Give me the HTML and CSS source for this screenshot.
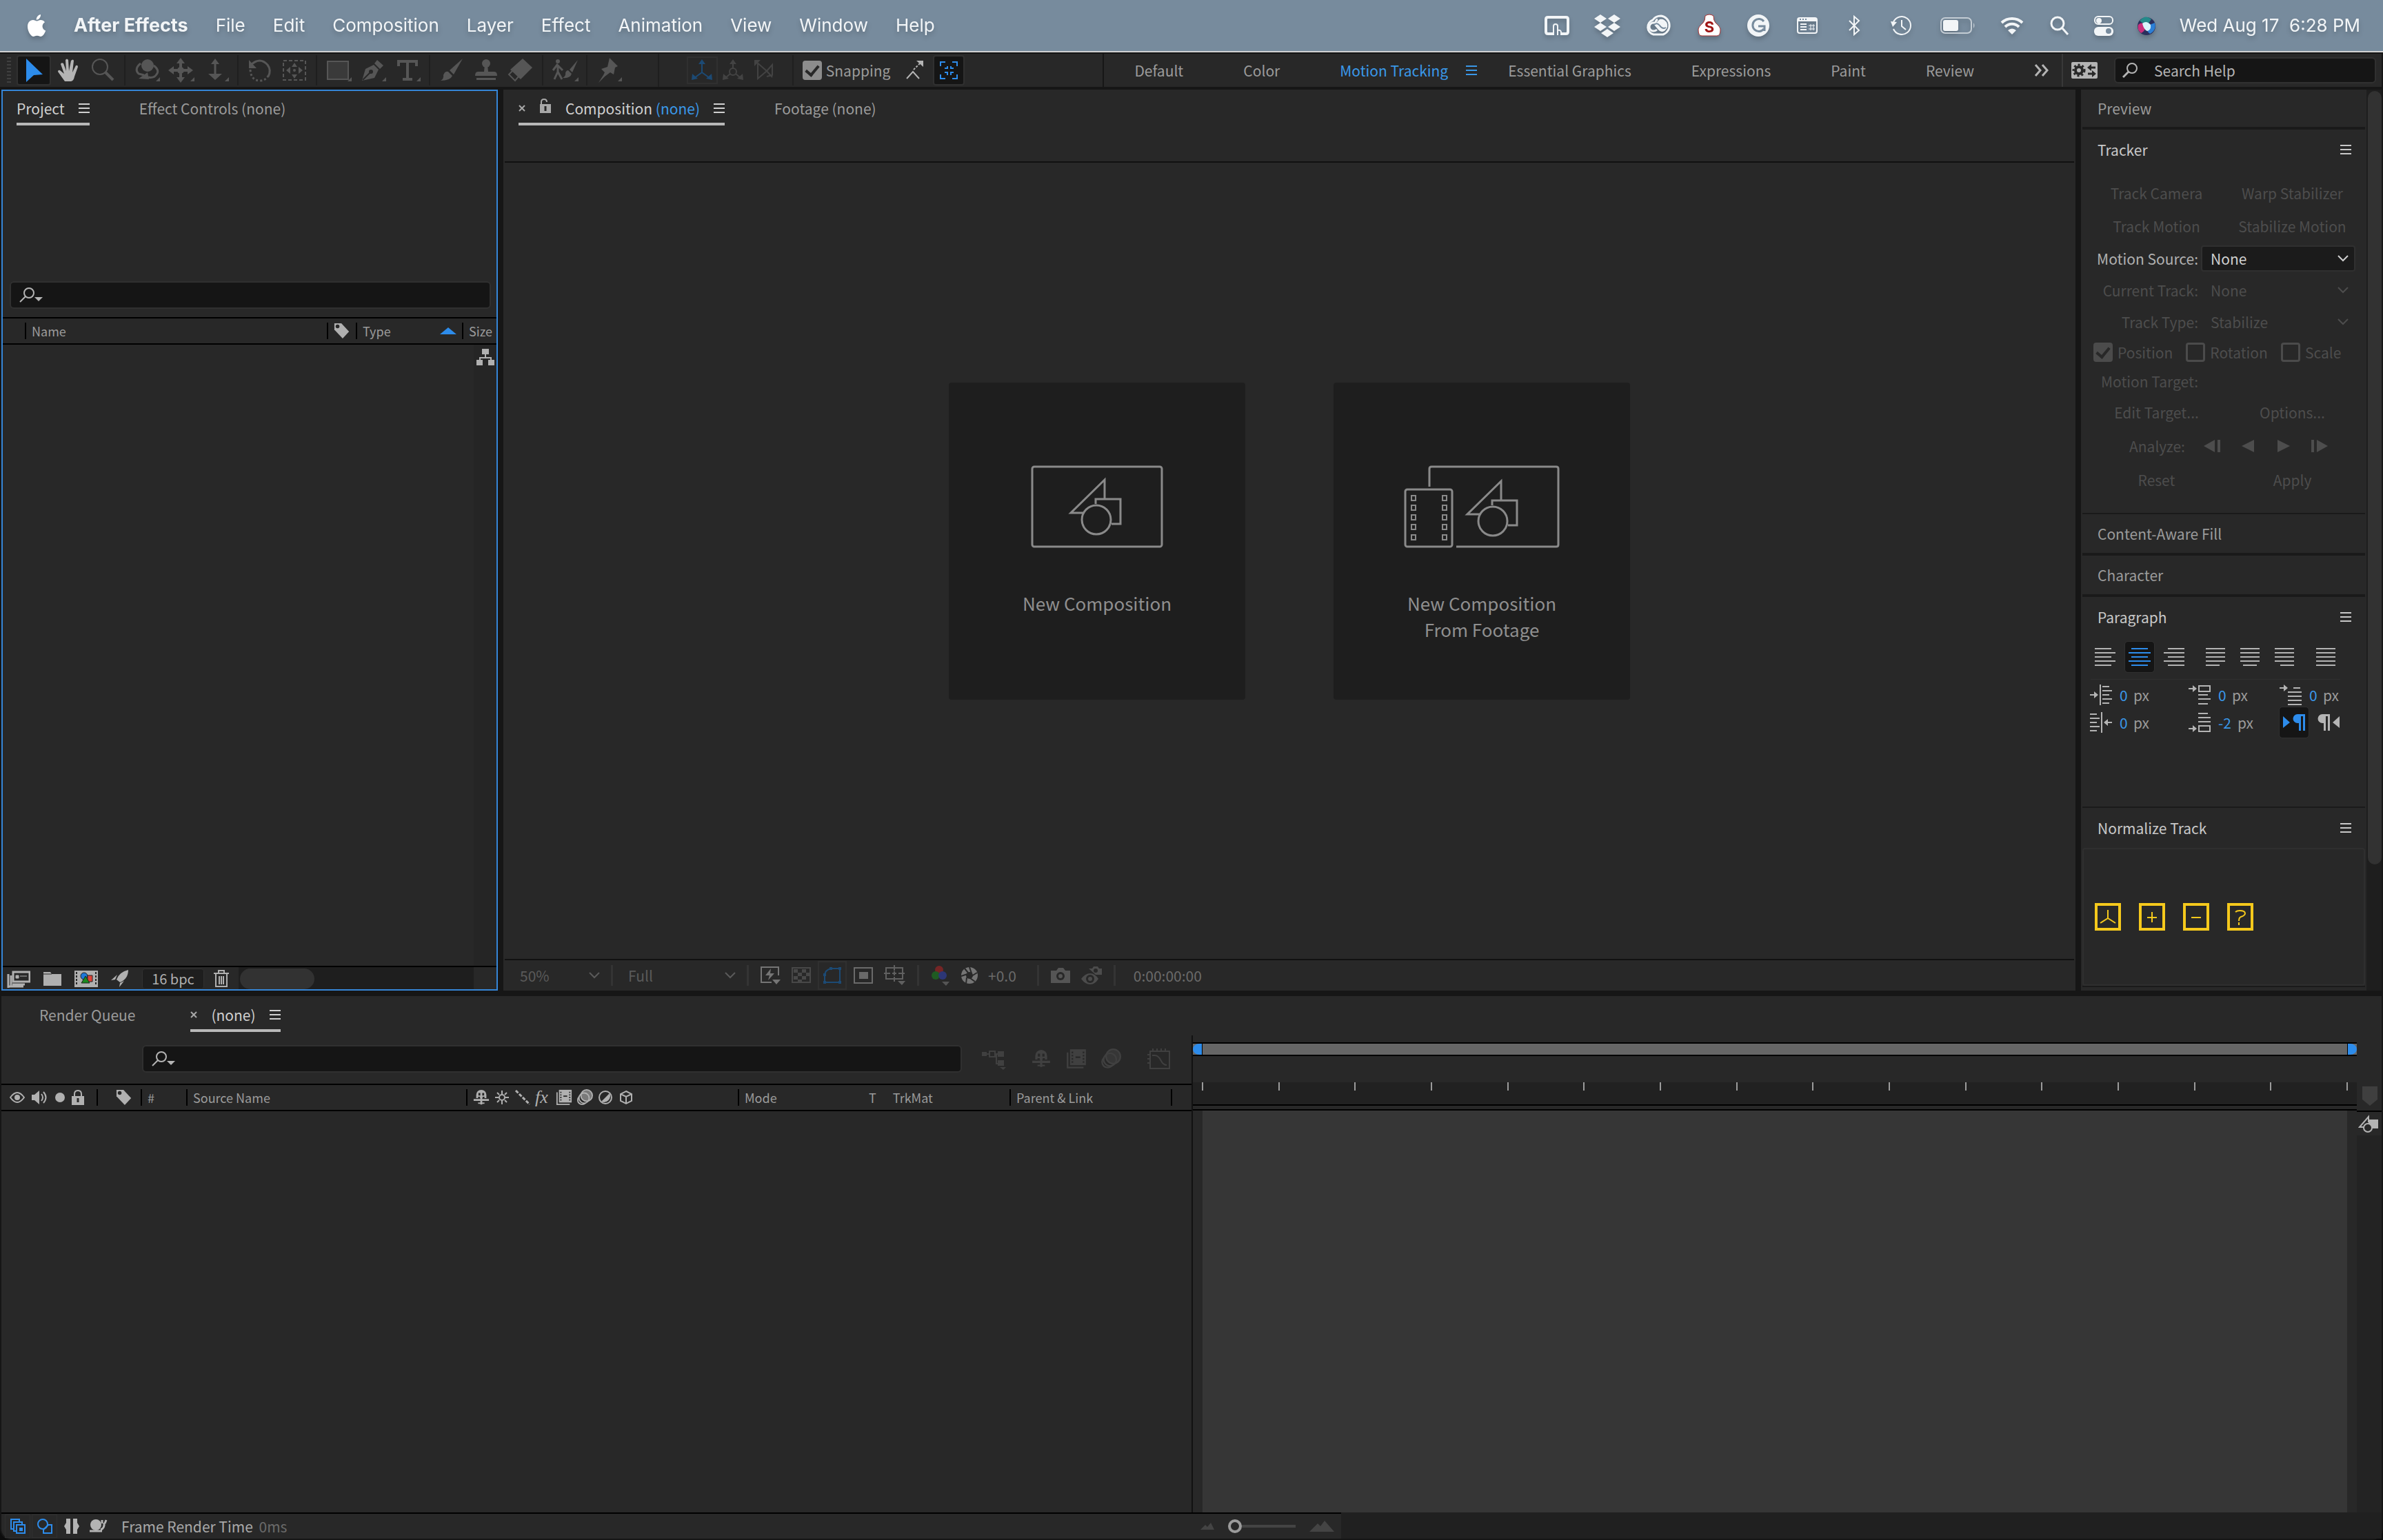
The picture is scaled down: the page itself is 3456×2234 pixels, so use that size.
FILE: index.html
```html
<!DOCTYPE html>
<html lang="en">
<head>
    <meta charset="UTF-8">
    <meta name="viewport" content="width=device-width, initial-scale=1.0">
    <title>After Effects</title>
    <link rel="stylesheet" href="styles.css">
</head>
<body>
    <!-- Shared icons -->
    <svg class="sprite" aria-hidden="true">
        <symbol id="i-menu" viewBox="0 0 16 14"><path d="M0 1h16M0 7h16M0 13h16" stroke="currentColor" stroke-width="2"/></symbol>
        <symbol id="i-search" viewBox="0 0 24 24"><circle cx="14" cy="9" r="7" fill="none" stroke="currentColor" stroke-width="2"/><path d="M9 14L1 22" stroke="currentColor" stroke-width="3"/></symbol>
        <symbol id="i-find" viewBox="0 0 36 24"><circle cx="14" cy="9" r="7" fill="none" stroke="currentColor" stroke-width="2"/><path d="M9 14L1 22" stroke="currentColor" stroke-width="2"/><path d="M22 15h12l-6 6z" fill="currentColor"/></symbol>
        <symbol id="i-chev" viewBox="0 0 16 10"><path d="M1 1l7 7 7-7" fill="none" stroke="currentColor" stroke-width="2"/></symbol>
        <symbol id="i-tag" viewBox="0 0 26 26"><path d="M1 1h11l12 13-10 11L1 11z" fill="currentColor"/><circle cx="6" cy="6" r="3" fill="#282828"/></symbol>
        <symbol id="i-close" viewBox="0 0 10 10"><path d="M1 1l8 8M9 1L1 9" stroke="currentColor" stroke-width="2"/></symbol>
        <symbol id="i-film" viewBox="0 0 26 26"><path d="M2 5v19h20" fill="none" stroke="currentColor" stroke-width="2"/><path d="M5 1h20v20H5z" fill="currentColor"/><path d="M8 4v15M22 4v15" stroke="#282828" stroke-width="2" stroke-dasharray="2 2"/><path d="M12 11h6" stroke="#282828" stroke-width="2"/></symbol>
        <symbol id="i-blur" viewBox="0 0 26 26"><circle cx="9" cy="17" r="7" fill="#282828" stroke="currentColor" stroke-width="2"/><circle cx="12" cy="14" r="8" fill="#282828" stroke="currentColor" stroke-width="2"/><circle cx="16" cy="10" r="9" fill="currentColor" fill-opacity=".6" stroke="currentColor" stroke-width="2"/></symbol>
        <symbol id="i-shy" viewBox="0 0 26 26"><path d="M5 14V9a8 8 0 0 1 16 0v5h-3v-2h-3v2h-4v-2H8v2z" fill="currentColor"/><path d="M10 6v4M16 6v4" stroke="#282828" stroke-width="3"/><path d="M1 17h24M13 14v10" stroke="currentColor" stroke-width="3"/><path d="M8 22h10" stroke="currentColor" stroke-width="2"/></symbol>
    </svg>

    <div class="desktop">
        <!-- System menu bar -->
        <header class="menubar">
            <nav class="menus">
                <a href="#" aria-label="Apple"><svg class="apple" width="27" height="32" viewBox="0 0 27 32"><path fill="#fff" d="M19 0c.3 2-.6 4-1.800 5.500C16 7 14.200 7.800 12.700 7.700c-.2-2 .7-4 1.900-5.300C15.800 1 17.600.1 19 0zM13.500 9.500c1.500 0 3-1.500 5.500-1.500 2.300 0 4.600 1.200 6 3.200-5.200 3-4.300 10.300 1.200 12.300C24.500 28 22 32 19 32c-2 0-2.700-1.200-5.200-1.200S10.300 32 8.500 32C5 32 0 24.500 0 17.500 0 11.500 3.800 8 7.800 8c2.400 0 4.200 1.500 5.700 1.500z"/></svg></a>
                <a href="#" class="app-name">After Effects</a>
                <a href="#">File</a>
                <a href="#">Edit</a>
                <a href="#">Composition</a>
                <a href="#">Layer</a>
                <a href="#">Effect</a>
                <a href="#">Animation</a>
                <a href="#">View</a>
                <a href="#">Window</a>
                <a href="#">Help</a>
            </nav>
            <div class="status">
                <svg width="38" height="36" viewBox="0 0 38 36"><path d="M14 30H6q-3 0-3-3V9q0-3 3-3h26q3 0 3 3v18q0 3-3 3h-6" fill="none" stroke="#f2f5f7" stroke-width="4"/><path d="M14 32V19q0-3 3-3t3 3v13M20 25q5-1 5 3v4" fill="none" stroke="#f2f5f7" stroke-width="2"/></svg>
                <svg width="40" height="36" viewBox="0 0 40 36"><path fill="#f2f5f7" d="M10 2l9 6-9 6-9-6zM30 2l9 6-9 6-9-6zM10 14l9 6-9 6-9-6zM30 14l9 6-9 6-9-6zM20 23l9 6-9 6-9-6z"/></svg>
                <svg width="40" height="36" viewBox="0 0 40 36"><path d="M13 31a11 11 0 0 1-1-21q4-6 12-6a14 14 0 0 1 3 27z" fill="none" stroke="#f2f5f7" stroke-width="3"/><path d="M19 9q-3 2-3 5h-3a6 6 0 0 0 0 12q3 0 5-2" fill="none" stroke="#f2f5f7" stroke-width="3"/><path d="M22 9a9 9 0 1 1 4 18q-4 0-7-4l-5-6" fill="#f2f5f7"/><path d="M14 17q4-4 8 1 4 6 9 3" fill="none" stroke="#778b9d" stroke-width="2"/></svg>
                <svg width="40" height="36" viewBox="0 0 40 36"><path d="M14 4q6-4 12 0 0 7 3 10 7 6 7 10 0 9-5 9H9q-5 0-5-9 0-4 7-10 3-3 3-10z" fill="#fff" stroke="#a33" stroke-width="1"/><text x="20" y="28" class="badge-s" text-anchor="middle">S</text></svg>
                <svg width="34" height="36" viewBox="0 0 34 36"><circle cx="17" cy="18" r="16" fill="#f2f5f7"/><path d="M25 12a9 9 0 1 0 0 11M17 19h9v7" fill="none" stroke="#778b9d" stroke-width="3"/></svg>
                <svg width="40" height="36" viewBox="0 0 40 36"><rect x="6" y="7" width="28" height="22" rx="3" fill="none" stroke="#f2f5f7" stroke-width="2"/><path d="M6 7h28v5H6z" fill="#f2f5f7"/><path d="M9 9h10" stroke="#778b9d" stroke-width="2" stroke-dasharray="2 2"/><path d="M10 16h9M10 20h9M10 24h9" stroke="#f2f5f7" stroke-width="2"/><path d="M25 16v9M29 16v9M22 18h9M22 23h9" stroke="#f2f5f7"/></svg>
                <svg width="28" height="36" viewBox="0 0 28 36"><path d="M7 11l14 14-7 6V5l7 6L7 25" fill="none" stroke="#f2f5f7" stroke-width="2"/></svg>
                <svg width="42" height="36" viewBox="0 0 42 36"><path d="M9 13a13 13 0 1 1 0 10" fill="none" stroke="#f2f5f7" stroke-width="2"/><path d="M5 12l9 1-6 7z" fill="#f2f5f7"/><path d="M21 10v9l6 5" fill="none" stroke="#f2f5f7" stroke-width="2"/></svg>
                <svg width="54" height="36" viewBox="0 0 54 36"><rect x="2" y="7" width="44" height="22" rx="6" fill="none" stroke="#c3ccd4" stroke-width="2"/><rect x="5" y="10" width="22" height="16" rx="3" fill="#f2f5f7"/><path d="M49 14q3 4 0 8z" fill="#c3ccd4"/></svg>
                <svg width="34" height="36" viewBox="0 0 34 36"><path d="M2 14a22 22 0 0 1 30 0M7 20a14 14 0 0 1 20 0" fill="none" stroke="#f2f5f7" stroke-width="4"/><path d="M11 25q6-5 12 0l-6 6z" fill="#f2f5f7"/></svg>
                <svg width="34" height="36" viewBox="0 0 34 36"><circle cx="15" cy="15" r="9" fill="none" stroke="#f2f5f7" stroke-width="3"/><path d="M22 22l8 9" stroke="#f2f5f7" stroke-width="3"/></svg>
                <svg width="28" height="36" viewBox="0 0 28 36"><rect x="1" y="5" width="26" height="11" rx="5" fill="none" stroke="#f2f5f7" stroke-width="2"/><circle cx="7" cy="11" r="4" fill="#f2f5f7"/><rect x="0" y="20" width="28" height="13" rx="6" fill="#f2f5f7"/><circle cx="21" cy="26" r="4" fill="#778b9d"/></svg>
                <svg width="28" height="36" viewBox="0 0 28 36"><circle cx="14" cy="19" r="13" fill="#2a2f5c"/><path d="M4 11q9-10 17-2l-7 10z" fill="#258a8a"/><path d="M2 17q5-6 12 2-3 8-8 10-6-5-4-12z" fill="#c8307c"/><path d="M14 19l12-5q3 11-7 16-5-3-5-11z" fill="#2c7fd6"/><path d="M8 15q6-5 12 2 1 8-5 9-5-2-7-11z" fill="#d9f4fb"/></svg>
                <time>Wed Aug 17&nbsp; 6:28 PM</time>
            </div>
        </header>

        <div class="app">
            <!-- Tools and workspaces -->
            <div class="toolbar">
                <span class="grip"></span>
                <div class="tools">
                    <button class="tool selected" aria-label="Selection"><svg width="34" height="36" viewBox="0 0 34 36"><path d="M6 1l24 23-13 1-11 10z" fill="currentColor"/></svg></button>
                    <button class="tool light" aria-label="Hand"><svg width="34" height="36" viewBox="0 0 34 36"><path d="M12 34L2 20q0-3 3-2l6 5L6 9q1-3 4-1l4 11-1-16q2-3 4 0l1 16 3-15q3-3 4 0l-2 17 5-10q3-1 3 2l-5 14q-1 6-5 7z" fill="currentColor"/></svg></button>
                    <button class="tool" aria-label="Zoom"><svg width="34" height="36" viewBox="0 0 34 36"><circle cx="13" cy="13" r="11" fill="none" stroke="currentColor" stroke-width="2"/><path d="M21 21l11 11" stroke="currentColor" stroke-width="4"/></svg></button>
                    <span class="sep"></span>
                    <button class="tool more" aria-label="Orbit"><svg width="38" height="36" viewBox="0 0 38 36"><circle cx="20" cy="11" r="9" fill="currentColor"/><path d="M10 8q-10 8-3 15l8 2M29 11q9 7 4 13-4 6-12 4" fill="none" stroke="currentColor" stroke-width="3"/><path d="M7 30l13-9 2 10z" fill="currentColor"/></svg></button>
                    <button class="tool more" aria-label="Pan"><svg width="38" height="36" viewBox="0 0 38 36"><path d="M18 4v28M4 18h28" stroke="currentColor" stroke-width="4"/><path d="M18 0l6 8H12zM18 36l6-8H12zM0 18l8-6v12zM36 18l-8-6v12z" fill="currentColor"/><circle cx="18" cy="18" r="5" fill="currentColor"/></svg></button>
                    <button class="tool more" aria-label="Dolly"><svg width="38" height="36" viewBox="0 0 38 36"><path d="M18 5v25" stroke="currentColor" stroke-width="3"/><path d="M18 1l6 8H12zM18 32L8 23h20z" fill="currentColor"/></svg></button>
                    <span class="sep"></span>
                    <button class="tool" aria-label="Rotation"><svg width="38" height="36" viewBox="0 0 38 36"><path d="M6 10q13-12 24 0 6 8 1 17" fill="none" stroke="currentColor" stroke-width="3"/><path d="M3 3v12h11z" fill="currentColor"/><path d="M5 17q1 16 14 16 8 0 12-7" fill="none" stroke="currentColor" stroke-width="3" stroke-dasharray="3 3"/></svg></button>
                    <button class="tool" aria-label="Anchor Point"><svg width="38" height="36" viewBox="0 0 38 36"><path d="M3 4h32v28H3z" fill="none" stroke="currentColor" stroke-width="2" stroke-dasharray="5 3"/><path d="M19 7l4 6h-8zM19 30l4-6h-8zM7 18l6-5v10zM31 18l-6-5v10z" fill="currentColor"/><circle cx="19" cy="18" r="2" fill="currentColor"/></svg></button>
                    <span class="sep"></span>
                    <button class="tool more" aria-label="Rectangle"><svg width="38" height="36" viewBox="0 0 38 36"><rect x="3" y="5" width="30" height="26" fill="#3a3a3a" stroke="currentColor" stroke-width="2"/></svg></button>
                    <button class="tool more" aria-label="Pen"><svg width="38" height="36" viewBox="0 0 38 36"><path d="M3 33L8 16l12-6 7 7-6 12z" fill="currentColor"/><path d="M21 8l4-5 9 8-5 5z" fill="currentColor"/><path d="M4 32l11-11" stroke="#282828" stroke-width="2"/><circle cx="16" cy="20" r="3" fill="#282828"/></svg></button>
                    <button class="tool more" aria-label="Type"><svg width="38" height="36" viewBox="0 0 38 36"><path d="M6 12V5h26v7M19 5v26M12 31h14" fill="none" stroke="currentColor" stroke-width="4"/></svg></button>
                    <span class="sep"></span>
                    <button class="tool" aria-label="Brush"><svg width="38" height="36" viewBox="0 0 38 36"><path d="M35 1L16 18l6 6z" fill="currentColor"/><path d="M14 20l6 6q-3 7-17 7 5-3 4-8 2-6 7-5z" fill="currentColor"/></svg></button>
                    <button class="tool" aria-label="Clone Stamp"><svg width="38" height="36" viewBox="0 0 38 36"><circle cx="19" cy="8" r="6" fill="currentColor"/><path d="M17 10h4l1 10h9q4 0 4 6H3q0-6 4-6h9zM5 29h28v3H5z" fill="currentColor"/></svg></button>
                    <button class="tool" aria-label="Eraser"><svg width="38" height="36" viewBox="0 0 38 36"><path d="M22 1l14 13-17 17L4 17z" fill="currentColor"/><path d="M7 19l-5 5 9 9 5-6" fill="none" stroke="currentColor" stroke-width="2"/></svg></button>
                    <span class="sep"></span>
                    <button class="tool more" aria-label="Roto Brush"><svg width="40" height="36" viewBox="0 0 40 36"><circle cx="10" cy="5" r="3" fill="currentColor"/><path d="M3 18l6-8 8 8M10 10v10l-5 11M10 20l6 11" fill="none" stroke="currentColor" stroke-width="3"/><path d="M39 3L27 17l4 4zM25 18l5 5q-2 7-13 6 5-3 4-7 1-4 4-4z" fill="currentColor"/></svg></button>
                    <span class="sep"></span>
                    <button class="tool more" aria-label="Puppet Pin"><svg width="38" height="36" viewBox="0 0 38 36"><path d="M20 0l12 12-4 2-2 10-5-3-8 6-9 9 7-11 2-4-5-5 9-3z" fill="currentColor"/></svg></button>
                </div>
                <span class="sep wide"></span>
                <div class="axes">
                    <button class="axis on" aria-label="Local axis"><svg width="34" height="32" viewBox="0 0 34 32"><path d="M17 5v14L6 27M17 19l11 8" fill="none" stroke="currentColor" stroke-width="2"/><path d="M17 0l5 7H12zM2 30l1-9 8 7zM32 30l-1-9-8 7z" fill="currentColor"/></svg></button>
                    <button class="axis" aria-label="World axis"><svg width="34" height="32" viewBox="0 0 34 32"><path d="M17 5v9M13 21l-7 6M21 21l7 6" stroke="currentColor" stroke-width="2"/><circle cx="17" cy="18" r="5" fill="none" stroke="currentColor" stroke-width="2"/><path d="M17 0l5 7H12zM2 30l1-9 8 7zM32 30l-1-9-8 7z" fill="currentColor"/></svg></button>
                    <button class="axis" aria-label="View axis"><svg width="34" height="32" viewBox="0 0 34 32"><path d="M5 3l16 14 8-9v15l-8 2M8 6v22l13-11M21 17l8 9" fill="none" stroke="currentColor" stroke-width="2"/><path d="M3 1h9l-9 9z" fill="currentColor"/></svg></button>
                </div>
                <span class="sep tall"></span>
                <div class="snapping">
                    <input type="checkbox" class="check" id="snapping" checked>
                    <label for="snapping">Snapping</label>
                    <svg class="edge-icon" width="28" height="28" viewBox="0 0 28 28"><path d="M2 26l9-10 9 10" fill="none" stroke="currentColor" stroke-width="2"/><path d="M12 13l9-9" stroke="currentColor" stroke-width="2" stroke-dasharray="3 2"/><path d="M16 0h10v9z" fill="currentColor"/></svg>
                    <button class="tool selected snap-box" aria-label="Snap to collapsed"><svg width="26" height="26" viewBox="0 0 26 26"><path d="M1 7V1h7M18 1h7v6M25 19v6h-7M8 25H1v-6M7 10h4V7M16 7v3h4M7 16h4v4M20 16h-4v4" fill="none" stroke="currentColor" stroke-width="2"/></svg></button>
                </div>
                <nav class="workspaces">
                    <button>Default</button>
                    <button>Color</button>
                    <button class="current">Motion Tracking <svg width="18" height="14"><use href="#i-menu"/></svg></button>
                    <button>Essential Graphics</button>
                    <button>Expressions</button>
                    <button>Paint</button>
                    <button>Review</button>
                    <button class="overflow" aria-label="More workspaces"><svg width="22" height="18" viewBox="0 0 22 18"><path d="M2 1l7 8-7 8M12 1l7 8-7 8" fill="none" stroke="currentColor" stroke-width="3"/></svg></button>
                </nav>
                <button class="sync" aria-label="Workspace settings"><svg width="38" height="24" viewBox="0 0 38 24"><rect width="38" height="24" rx="2" fill="currentColor"/><circle cx="11" cy="12" r="5" fill="none" stroke="#282828" stroke-width="4"/><circle cx="11" cy="12" r="8" fill="none" stroke="#282828" stroke-width="3" stroke-dasharray="3 3"/><path d="M26 8h9M24 17h8" stroke="#282828" stroke-width="3"/><path d="M29 3v10l-6-5zM30 12v10l6-5z" fill="#282828"/></svg></button>
                <div class="help-search">
                    <svg width="24" height="24"><use href="#i-search"/></svg>
                    <input type="text" placeholder="Search Help" aria-label="Search Help">
                </div>
            </div>

            <div class="upper">
                <!-- Project panel -->
                <section class="panel project">
                    <div class="tabs">
                        <button class="tab active">Project <svg width="16" height="14"><use href="#i-menu"/></svg></button>
                        <button class="tab">Effect Controls (none)</button>
                    </div>
                    <div class="find project-find">
                        <svg width="36" height="24"><use href="#i-find"/></svg>
                        <input type="text" aria-label="Search project">
                    </div>
                    <table class="columns">
                        <colgroup><col class="w34"><col><col class="w42"><col class="w154"><col class="w52"></colgroup>
                        <thead>
                            <tr>
                                <th></th>
                                <th><span class="col">Name</span></th>
                                <th><span class="col"><svg width="24" height="24"><use href="#i-tag"/></svg></span></th>
                                <th><span class="col">Type <svg class="sort" width="24" height="10" viewBox="0 0 24 10"><path d="M12 0l12 10H0z" fill="#2d8ceb"/></svg></span></th>
                                <th><span class="col">Size</span></th>
                            </tr>
                        </thead>
                    </table>
                    <div class="project-list">
                        <div class="project-gutter"><svg width="26" height="24" viewBox="0 0 26 24"><path d="M8 0h10v8H8zM0 16h9v8H0zM17 16h9v8h-9z" fill="currentColor"/><path d="M13 7v6M5 17v-4h16v4" fill="none" stroke="currentColor" stroke-width="2"/></svg></div>
                    </div>
                    <div class="project-footer">
                        <button aria-label="Interpret footage"><svg width="34" height="26" viewBox="0 0 34 26"><rect x="9" y="3" width="24" height="14" fill="none" stroke="currentColor" stroke-width="3"/><path d="M13 8h4v4h-4zM19 9h10" fill="currentColor" stroke="currentColor"/><path d="M2 6v20M6 8v16M2 24h22M8 21h18" fill="none" stroke="currentColor" stroke-width="3"/></svg></button>
                        <button aria-label="New folder"><svg width="28" height="22" viewBox="0 0 28 22"><path d="M1 1h10l2 3h14v17H1z" fill="currentColor"/><path d="M1 4h12" stroke="#282828"/></svg></button>
                        <button aria-label="New composition"><svg width="34" height="24" viewBox="0 0 34 24"><path d="M0 0h34v24H0z" fill="currentColor"/><path d="M3 2v20M31 2v20" stroke="#282828" stroke-width="2" stroke-dasharray="3 2"/><circle cx="14" cy="8" r="5" fill="#1e78d8" stroke="#222"/><path d="M19 7h7v9h-7z" fill="#e04338" stroke="#222"/><path d="M16 8l6 10H10z" fill="#1c8a20" stroke="#222"/></svg></button>
                        <button aria-label="Project settings"><svg width="28" height="26" viewBox="0 0 28 26"><path d="M26 0q0 13-12 18l-5-4Q13 3 26 0zM10 7L1 15l6-1zM20 16l-7 9 1-6z" fill="currentColor"/></svg></button>
                        <button class="depth">16 bpc</button>
                        <button class="trash" aria-label="Delete"><svg width="22" height="26" viewBox="0 0 22 26"><path d="M0 5h22M7 4V1h8v3M3 6v18h16V6" fill="none" stroke="currentColor" stroke-width="2"/><path d="M8 9v12M11 9v12M14 9v12" stroke="currentColor" stroke-width="2"/></svg></button>
                        <div class="hscroll"><span class="hthumb"></span></div>
                    </div>
                </section>

                <!-- Composition viewer -->
                <section class="panel viewer">
                    <div class="tabs">
                        <button class="tab active"><svg class="close" width="10" height="10"><use href="#i-close"/></svg> <svg class="lock" width="18" height="22" viewBox="0 0 18 22"><path d="M3 9V5q0-4 4-4t4 4" fill="none" stroke="currentColor" stroke-width="2"/><path d="M1 8h16v13H1z" fill="currentColor"/><path d="M9 11v7" stroke="#282828" stroke-width="3"/></svg> <span>Composition <em>(none)</em></span> <svg width="16" height="14"><use href="#i-menu"/></svg></button>
                        <button class="tab">Footage (none)</button>
                    </div>
                    <div class="stage">
                        <button class="card">
                            <svg width="192" height="120" viewBox="0 0 192 120"><g fill="none" stroke="#8a8a8a" stroke-width="3"><rect x="2" y="2" width="188" height="116" rx="3"/><path d="M76 69H58l49-48v27M94 56v-7h36v36h-13"/><circle cx="95" cy="79" r="21"/></g></svg>
                            <span>New Composition</span>
                        </button>
                        <button class="card">
                            <svg width="226" height="120" viewBox="0 0 226 120"><g fill="none" stroke="#8a8a8a" stroke-width="3"><path d="M37 31V5q0-3 3-3h181q3 0 3 3v110q0 3-3 3H76"/><rect x="2" y="35" width="68" height="83" rx="3"/><path d="M110 71H92l49-48v27M128 58v-7h36v36h-13"/><circle cx="129" cy="81" r="21"/></g><g fill="none" stroke="#8a8a8a" stroke-width="2"><path d="M11 44h6v7h-6zM11 58h6v7h-6zM11 72h6v7h-6zM11 86h6v7h-6zM11 101h6v7h-6zM56 44h6v7h-6zM56 58h6v7h-6zM56 72h6v7h-6zM56 86h6v7h-6zM56 101h6v7h-6z"/></g></svg>
                            <span>New Composition<br>From Footage</span>
                        </button>
                    </div>
                    <div class="viewer-footer">
                        <span class="select zoom-level"><select aria-label="Magnification" disabled><option>50%</option></select><svg width="16" height="10"><use href="#i-chev"/></svg></span>
                        <span class="sep"></span>
                        <span class="select resolution"><select aria-label="Resolution" disabled><option>Full</option></select><svg width="16" height="10"><use href="#i-chev"/></svg></span>
                        <span class="sep"></span>
                        <div class="view-tools">
                            <button aria-label="Fast previews"><svg width="30" height="28" viewBox="0 0 30 28"><path d="M27 14V2H2v22h15" fill="none" stroke="#757575" stroke-width="2"/><path d="M16 4L8 14h6l-2 7 9-10h-6z" fill="#757575"/><path d="M18 20h12l-6 7z" fill="#757575"/></svg></button>
                            <button aria-label="Transparency grid"><svg width="30" height="28" viewBox="0 0 30 28"><rect x="2" y="3" width="26" height="21" fill="none" stroke="currentColor" stroke-width="2"/><path d="M4 5h6v5H4zM16 5h6v5h-6zM10 10h6v5h-6zM22 10h5v5h-5zM4 15h6v5H4zM16 15h6v5h-6zM10 20h6v3h-6z" fill="currentColor"/></svg></button>
                            <button class="on" aria-label="Mask visibility"><svg width="30" height="28" viewBox="0 0 30 28"><path d="M4 24V13q1-7 9-9h13v20z" fill="none" stroke="#1c4a74" stroke-width="2"/><path d="M2 22h4v4H2zM24 22h4v4h-4zM24 2h4v4h-4zM11 2h4v4h-4zM2 11h4v4H2z" fill="#1c4a74"/></svg></button>
                            <button aria-label="Region of interest"><svg width="30" height="28" viewBox="0 0 30 28"><rect x="2" y="3" width="26" height="22" fill="none" stroke="#6a6a6a" stroke-width="2"/><path d="M9 9h13v10H9z" fill="#6a6a6a"/></svg></button>
                            <button aria-label="Guides"><svg width="32" height="30" viewBox="0 0 32 30"><path d="M3 4h24v16H3z" fill="none" stroke="#606060" stroke-width="2"/><path d="M15 0v8M15 17v7M0 12h9M21 12h9M12 12h6M15 9v6" stroke="#606060" stroke-width="2"/><path d="M20 23h11l-5 6z" fill="#606060"/></svg></button>
                        </div>
                        <span class="sep"></span>
                        <button aria-label="Channels"><svg width="30" height="30" viewBox="0 0 30 30"><circle cx="13" cy="7" r="6" fill="#752525"/><circle cx="8" cy="15" r="6" fill="#1f5b22"/><circle cx="18" cy="15" r="6" fill="#2c3675"/><path d="M17 24h11l-5 6z" fill="#555"/></svg></button>
                        <button class="aperture" aria-label="Reset exposure"><svg width="26" height="26" viewBox="0 0 26 26"><circle cx="13" cy="13" r="12" fill="#757575"/><path d="M13 1l3 9M24 9l-8 5M21 22l-7-5M8 25l1-9M1 14l9-3M6 3l5 6" stroke="#282828" stroke-width="2"/><circle cx="13" cy="13" r="5" fill="#282828"/></svg></button>
                        <span class="exposure">+0.0</span>
                        <span class="sep"></span>
                        <button aria-label="Take snapshot"><svg width="30" height="26" viewBox="0 0 30 26"><path d="M1 6h8l3-4h7l3 4h7v18H1z" fill="#555"/><circle cx="15" cy="14" r="6" fill="#282828"/><circle cx="15" cy="14" r="3" fill="#555"/></svg></button>
                        <button aria-label="Show snapshot"><svg width="32" height="28" viewBox="0 0 32 28"><path d="M12 4h5l2-3h6l2 3h4v9h-9" fill="#4c4c4c"/><circle cx="22" cy="7" r="3" fill="#282828"/><path d="M1 19q6-8 13-8t12 8q-5 8-12 8T1 19z" fill="#4c4c4c"/><circle cx="14" cy="19" r="6" fill="#282828"/><circle cx="14" cy="19" r="3" fill="#4c4c4c"/></svg></button>
                        <span class="sep"></span>
                        <span class="timecode">0:00:00:00</span>
                    </div>
                </section>

                <!-- Stacked side panels -->
                <aside class="side">
                    <div class="stack">
                        <section class="group preview"><h2>Preview</h2></section>
                        <section class="group tracker">
                            <h2 class="open">Tracker <svg width="16" height="14"><use href="#i-menu"/></svg></h2>
                            <div class="pair first"><button disabled>Track Camera</button><button disabled>Warp Stabilizer</button></div>
                            <div class="pair"><button disabled>Track Motion</button><button disabled>Stabilize Motion</button></div>
                            <div class="field enabled"><label for="source">Motion Source:</label><span class="select"><select id="source"><option>None</option></select><svg width="16" height="10"><use href="#i-chev"/></svg></span></div>
                            <div class="field"><label for="track">Current Track:</label><span class="select"><select id="track" disabled><option>None</option></select><svg width="16" height="10"><use href="#i-chev"/></svg></span></div>
                            <div class="field"><label for="type">Track Type:</label><span class="select"><select id="type" disabled><option>Stabilize</option></select><svg width="16" height="10"><use href="#i-chev"/></svg></span></div>
                            <div class="checks">
                                <span><input type="checkbox" class="check" id="position" checked disabled><label for="position">Position</label></span>
                                <span><input type="checkbox" class="check" id="rotation" disabled><label for="rotation">Rotation</label></span>
                                <span><input type="checkbox" class="check" id="scale" disabled><label for="scale">Scale</label></span>
                            </div>
                            <div class="field target"><span>Motion Target:</span></div>
                            <div class="pair"><button disabled>Edit Target...</button><button disabled>Options...</button></div>
                            <div class="analyze">
                                <span>Analyze:</span>
                                <button aria-label="Analyze 1 frame backward" disabled><svg width="26" height="18" viewBox="0 0 26 18"><path d="M17 0v18L1 9zM21 0h4v18h-4z" fill="currentColor"/></svg></button>
                                <button aria-label="Analyze backward" disabled><svg width="26" height="18" viewBox="0 0 26 18"><path d="M22 0v18L4 9z" fill="currentColor"/></svg></button>
                                <button aria-label="Analyze forward" disabled><svg width="26" height="18" viewBox="0 0 26 18"><path d="M4 0v18l18-9z" fill="currentColor"/></svg></button>
                                <button aria-label="Analyze 1 frame forward" disabled><svg width="26" height="18" viewBox="0 0 26 18"><path d="M9 0v18l16-9zM1 0h4v18H1z" fill="currentColor"/></svg></button>
                            </div>
                            <div class="pair"><button disabled>Reset</button><button disabled>Apply</button></div>
                        </section>
                        <section class="group"><h2>Content-Aware Fill</h2></section>
                        <section class="group"><h2>Character</h2></section>
                        <section class="group paragraph">
                            <h2 class="open">Paragraph <svg width="16" height="14"><use href="#i-menu"/></svg></h2>
                            <div class="aligns">
                                <div>
                                    <button aria-label="Left align"><svg width="32" height="26" viewBox="0 0 32 26"><path d="M1 1h24M1 7h30M1 13h24M1 19h30M1 25h24" stroke="currentColor" stroke-width="2"/></svg></button>
                                    <button class="on" aria-label="Center"><svg width="32" height="26" viewBox="0 0 32 26"><path d="M4 1h24M0 7h32M4 13h24M0 19h32M4 25h24" stroke="currentColor" stroke-width="2"/></svg></button>
                                    <button aria-label="Right align"><svg width="32" height="26" viewBox="0 0 32 26"><path d="M7 1h24M1 7h30M7 13h24M1 19h30M7 25h24" stroke="currentColor" stroke-width="2"/></svg></button>
                                </div>
                                <div>
                                    <button aria-label="Justify last left"><svg width="32" height="26" viewBox="0 0 32 26"><path d="M2 1h28M2 7h28M2 13h28M2 19h28M2 25h20" stroke="currentColor" stroke-width="2"/></svg></button>
                                    <button aria-label="Justify last centered"><svg width="32" height="26" viewBox="0 0 32 26"><path d="M2 1h28M2 7h28M2 13h28M2 19h28M6 25h20" stroke="currentColor" stroke-width="2"/></svg></button>
                                    <button aria-label="Justify last right"><svg width="32" height="26" viewBox="0 0 32 26"><path d="M2 1h28M2 7h28M2 13h28M2 19h28M10 25h20" stroke="currentColor" stroke-width="2"/></svg></button>
                                </div>
                                <div>
                                    <button aria-label="Justify all"><svg width="32" height="26" viewBox="0 0 32 26"><path d="M2 1h28M2 7h28M2 13h28M2 19h28M2 25h28" stroke="currentColor" stroke-width="2"/></svg></button>
                                </div>
                            </div>
                            <div class="indents">
                                <label><svg width="32" height="30" viewBox="0 0 32 30"><path d="M0 15h7M15 0v30M18 3h10M18 9h14M18 15h10M18 21h14M18 27h10" stroke="currentColor" stroke-width="2"/><path d="M6 10l6 5-6 5z" fill="currentColor"/></svg><input type="text" value="0"> px</label>
                                <label><svg width="32" height="30" viewBox="0 0 32 30"><path d="M0 6h7M14 15h14M14 21h18M14 28h14" stroke="currentColor" stroke-width="2"/><path d="M15 2h16v8H15z" fill="none" stroke="currentColor" stroke-width="2"/><path d="M6 1l6 5-6 5z" fill="currentColor"/></svg><input type="text" value="0"> px</label>
                                <label><svg width="32" height="30" viewBox="0 0 32 30"><path d="M0 5h7M20 5h10M12 11h20M12 17h20M12 23h20M12 29h20" stroke="currentColor" stroke-width="2"/><path d="M6 0l6 5-6 5z" fill="currentColor"/></svg><input type="text" value="0"> px</label>
                                <label><svg width="32" height="30" viewBox="0 0 32 30"><path d="M25 15h7M17 0v30M0 3h10M0 9h14M0 15h10M0 21h14M0 27h10" stroke="currentColor" stroke-width="2"/><path d="M26 10l-6 5 6 5z" fill="currentColor"/></svg><input type="text" value="0"> px</label>
                                <label><svg width="32" height="30" viewBox="0 0 32 30"><path d="M0 24h7M14 2h14M14 8h18M14 14h18" stroke="currentColor" stroke-width="2"/><path d="M15 20h16v8H15z" fill="none" stroke="currentColor" stroke-width="2"/><path d="M6 19l6 5-6 5z" fill="currentColor"/></svg><input type="text" class="two" value="-2"> px</label>
                                <div class="directions">
                                    <button class="on" aria-label="Left to right"><svg width="34" height="26" viewBox="0 0 34 26"><path d="M1 4v17l10-8zM22 1h11v24h-3V4h-3v21h-3V14h-2a6 6 0 0 1 0-13z" fill="currentColor"/></svg></button>
                                    <button aria-label="Right to left"><svg width="34" height="26" viewBox="0 0 34 26"><path d="M33 4v17l-10-8zM8 1h11v24h-3V4h-3v21h-3V14H8A6 6 0 0 1 8 1z" fill="currentColor"/></svg></button>
                                </div>
                            </div>
                        </section>
                        <section class="group normalize">
                            <h2 class="open">Normalize Track <svg width="16" height="14"><use href="#i-menu"/></svg></h2>
                            <div class="script-box">
                                <button aria-label="Normalize"><svg width="38" height="40" viewBox="0 0 38 40"><path d="M19 10v13M19 22L8 29M19 22l11 7" stroke="currentColor" stroke-width="2"/></svg></button>
                                <button aria-label="Add"><svg width="38" height="40" viewBox="0 0 38 40"><path d="M19 13v15M12 21h14" stroke="currentColor" stroke-width="2"/></svg></button>
                                <button aria-label="Remove"><svg width="38" height="40" viewBox="0 0 38 40"><path d="M12 21h14" stroke="currentColor" stroke-width="2"/></svg></button>
                                <button aria-label="Help"><svg width="38" height="40" viewBox="0 0 38 40"><path d="M12 13q2-2 6-2 8 0 8 4 0 3-6 5-3 1-3 6M17 28v4" fill="none" stroke="currentColor" stroke-width="2"/></svg></button>
                            </div>
                        </section>
                    </div>
                    <div class="vscroll"><span class="vthumb"></span></div>
                </aside>
            </div>

            <!-- Timeline -->
            <section class="timeline">
                <div class="tabs">
                    <button class="tab queue">Render Queue</button>
                    <button class="tab active"><svg class="close" width="10" height="10"><use href="#i-close"/></svg> <span>(none)</span> <svg width="16" height="14"><use href="#i-menu"/></svg></button>
                </div>
                <div class="tracks">
                    <div class="layers">
                        <div class="layer-tools">
                            <div class="find">
                                <svg width="36" height="24"><use href="#i-find"/></svg>
                                <input type="text" aria-label="Search layers">
                            </div>
                            <button class="flowchart" aria-label="Mini-flowchart"><svg width="36" height="32" viewBox="0 0 36 32"><path d="M2 9h10M12 5h8v8h-8zM20 9h5M22 9v14h4" fill="none" stroke="currentColor" stroke-width="2"/><path d="M1 6h7v6H1zM24 5h9v8h-9zM24 18h9v8h-9zM27 28h9l-4 4z" fill="currentColor"/></svg></button>
                            <button aria-label="Hide shy layers"><svg width="32" height="28"><use href="#i-shy"/></svg></button>
                            <button aria-label="Frame blending"><svg width="30" height="30"><use href="#i-film"/></svg></button>
                            <button aria-label="Motion blur"><svg width="30" height="30"><use href="#i-blur"/></svg></button>
                            <button class="graph" aria-label="Graph editor"><svg width="34" height="32" viewBox="0 0 34 32"><rect x="4" y="5" width="28" height="25" fill="none" stroke="currentColor" stroke-width="2"/><path d="M7 11h4q5 0 9 8 3 6 8 6M8 1v4M14 1v4M20 1v4M26 1v4M0 10h4M0 16h4M0 22h4" fill="none" stroke="currentColor" stroke-width="2"/></svg></button>
                        </div>
                        <table class="columns">
                            <colgroup><col class="w138"><col class="w64"><col class="w66"><col class="w406"><col class="w394"><col class="w166"><col class="w228"><col class="w234"><col></colgroup>
                            <thead>
                                <tr>
                                    <th>
                                        <span class="switches av">
                                            <svg width="22" height="18" viewBox="0 0 22 18"><path d="M1 9q10-14 20 0-10 14-20 0z" fill="none" stroke="currentColor" stroke-width="2"/><circle cx="11" cy="9" r="4" fill="currentColor"/></svg>
                                            <svg width="24" height="22" viewBox="0 0 24 22"><path d="M0 7h4l7-6v20l-7-6H0z" fill="currentColor"/><path d="M14 6q4 5 0 10M17 3q7 8 0 16" fill="none" stroke="currentColor" stroke-width="2"/></svg>
                                            <svg width="14" height="14" viewBox="0 0 14 14"><circle cx="7" cy="7" r="7" fill="currentColor"/></svg>
                                            <svg width="18" height="22" viewBox="0 0 18 22"><path d="M4 10V6q0-5 5-5t5 5v4" fill="none" stroke="currentColor" stroke-width="2"/><path d="M0 9h18v13H0z" fill="currentColor"/><path d="M9 12v6" stroke="#282828" stroke-width="3"/></svg>
                                        </span>
                                    </th>
                                    <th><span class="col label"><svg width="24" height="24"><use href="#i-tag"/></svg></span></th>
                                    <th><span class="col">#</span></th>
                                    <th><span class="col">Source Name</span></th>
                                    <th>
                                        <span class="col switches">
                                            <svg width="24" height="24"><use href="#i-shy"/></svg>
                                            <svg width="24" height="24" viewBox="0 0 24 24"><circle cx="12" cy="12" r="4" fill="none" stroke="currentColor" stroke-width="2"/><path d="M12 2v5M12 17v5M2 12h5M17 12h5M5 5l3 3M16 16l3 3M19 5l-3 3M8 16l-3 3" stroke="currentColor" stroke-width="2"/></svg>
                                            <svg width="24" height="24" viewBox="0 0 24 24"><path d="M2 2l20 20" stroke="currentColor" stroke-width="3" stroke-dasharray="5 2"/></svg>
                                            <i>fx</i>
                                            <svg width="24" height="24"><use href="#i-film"/></svg>
                                            <svg width="24" height="24"><use href="#i-blur"/></svg>
                                            <svg width="24" height="24" viewBox="0 0 24 24"><circle cx="12" cy="12" r="9" fill="none" stroke="currentColor" stroke-width="2"/><path d="M18 6a9 9 0 0 1-12 12z" fill="currentColor"/></svg>
                                            <svg width="24" height="24" viewBox="0 0 24 24"><path d="M12 3l8 4v10l-8 4-8-4V7zM4 7l8 4 8-4M12 11v10" fill="none" stroke="currentColor" stroke-width="2"/></svg>
                                        </span>
                                    </th>
                                    <th><span class="col">Mode</span></th>
                                    <th><span class="matte"><span>T</span><span>TrkMat</span></span></th>
                                    <th><span class="col">Parent &amp; Link</span></th>
                                    <th><span class="col"></span></th>
                                </tr>
                            </thead>
                        </table>
                    </div>
                    <div class="time">
                        <div class="workarea"></div>
                        <div class="ruler">
                            <i></i><i></i><i></i><i></i><i></i><i></i><i></i><i></i><i></i><i></i><i></i><i></i><i></i><i></i><i></i><i></i>
                        </div>
                        <div class="lane"></div>
                    </div>
                    <div class="markers">
                        <div class="bin"><svg width="22" height="28" viewBox="0 0 22 28"><path d="M0 0h22v19l-11 9-11-9z" fill="#3f3f3f"/></svg></div>
                        <div class="comp-button"><svg width="30" height="28" viewBox="0 0 30 28"><path d="M15 7h14v13H15z" fill="currentColor"/><path d="M8 18H2L15 3v8" fill="none" stroke="currentColor" stroke-width="2"/><circle cx="14" cy="19" r="6" fill="#282828" stroke="currentColor" stroke-width="2"/></svg></div>
                    </div>
                </div>
                <footer class="timeline-footer">
                    <div class="footer-left">
                        <button class="on" aria-label="Layer switches"><svg width="24" height="24" viewBox="0 0 24 24"><path d="M6 16H2V2h12v3M10 19H6V6h12v3" fill="none" stroke="currentColor" stroke-width="2"/><rect x="10" y="10" width="12" height="12" fill="none" stroke="currentColor" stroke-width="2"/><path d="M14 14h5v5h-5z" fill="currentColor"/></svg></button>
                        <button class="on" aria-label="Transfer controls"><svg width="24" height="24" viewBox="0 0 24 24"><circle cx="9" cy="9" r="7" fill="none" stroke="currentColor" stroke-width="2"/><path d="M17 10h5v12H10v-5l7-7z" fill="none" stroke="currentColor" stroke-width="2"/></svg></button>
                        <button aria-label="In and out"><svg width="24" height="24" viewBox="0 0 24 24"><path d="M4 1h6v22H4v-6l-3-5 3-5zM14 1h6v6l3 5-3 5v6h-6z" fill="currentColor"/></svg></button>
                        <button aria-label="Render time"><svg width="26" height="22" viewBox="0 0 26 22"><circle cx="9" cy="9" r="8" fill="currentColor"/><path d="M0 18h18M16 16q6-2 5-10M18 2v5M24 2l-2 5" fill="none" stroke="currentColor" stroke-width="3"/></svg></button>
                        <span class="render-time">Frame Render Time <small>0ms</small></span>
                    </div>
                    <div class="footer-zoom">
                        <svg width="20" height="10" viewBox="0 0 20 10"><path d="M0 10l7-7 3 3 5-6 5 10z" fill="#444"/></svg>
                        <input type="range" min="0" max="100" value="0" aria-label="Timeline zoom">
                        <svg width="36" height="16" viewBox="0 0 36 16"><path d="M0 16L12 4l4 4 6-8 14 16z" fill="#444"/></svg>
                    </div>
                    <div class="footer-scroll"></div>
                </footer>
            </section>
        </div>
    </div>
</body>
</html>
```
FILE: styles.css
```css
* {
    box-sizing: border-box;
}
body {
    margin: 0;
    background: #0c0c0c;
    color: #9b9b9b;
    font-family: "Noto Sans CJK SC", "Noto Sans", sans-serif;
    font-size: 21px;
    line-height: 28px;
}
button, input, select {
    font: inherit;
    color: inherit;
    background: none;
    border: none;
    padding: 0;
    margin: 0;
    outline: none;
}
svg {
    display: block;
    flex: none;
}
button {
    display: flex;
    align-items: center;
    justify-content: center;
    white-space: nowrap;
}
.sprite {
    position: absolute;
    width: 0;
    height: 0;
}
.desktop {
    display: flex;
    flex-direction: column;
    height: 100vh;
}

/* System menu bar */
.menubar {
    display: flex;
    justify-content: space-between;
    align-items: center;
    height: 76px;
    padding: 0 33px 0 40px;
    background: #778b9d;
    border-bottom: 2px solid #d2d2d2;
    color: #f2f5f7;
    font-family: Inter, sans-serif;
    font-size: 26px;
}
.menus, .status {
    display: flex;
    align-items: center;
    filter: drop-shadow(0 4px 3px rgba(0, 0, 0, 0.2));
}
.menus {
    gap: 40px;
}
.status {
    gap: 34px;
}
.menus a {
    color: inherit;
    text-decoration: none;
}
.menus .app-name {
    font-size: 27px;
    font-weight: 700;
}
.badge-s {
    font-size: 22px;
    font-weight: 700;
    fill: #a01515;
}

/* Toolbar */
.app {
    flex: 1;
    display: flex;
    flex-direction: column;
    min-height: 0;
    padding: 2px 2px 2px 0;
    background: #161616;
    border-radius: 0 0 16px 16px;
}
.toolbar {
    display: flex;
    align-items: center;
    height: 48px;
    margin-bottom: 4px;
    padding: 0 8px 0 10px;
    background: #282828;
}
.grip {
    width: 6px;
    height: 38px;
    margin-right: 8px;
    background: repeating-linear-gradient(#404040 0 2px, #282828 2px 5px);
}
.tools, .axes, .snapping {
    display: flex;
    align-items: center;
}
.tool {
    width: 50px;
    height: 44px;
    color: #565656;
    border-radius: 4px;
}
.tool.light {
    color: #b4b4b4;
}
.tool.selected {
    background: #151515;
    border: 2px solid #303030;
    color: #2d8ceb;
}
.tool.more::after {
    content: "";
    align-self: flex-end;
    margin: 0 0 6px -6px;
    border-left: 6px solid transparent;
    border-bottom: 6px solid #565656;
}
.sep {
    width: 2px;
    height: 44px;
    margin: 0 6px;
    background: #1f1f1f;
}
.sep.wide {
    height: 48px;
    margin: 0 40px 0 46px;
}
.axis {
    width: 45px;
    height: 40px;
    color: #434343;
}
.axis.on {
    border: 2px solid #303030;
    color: #1c4a74;
}
.sep.tall {
    margin: 0 13px 0 18px;
}
.check {
    appearance: none;
    width: 28px;
    height: 28px;
    border: 3px solid #8c8c8c;
    border-radius: 4px;
    display: grid;
    place-content: center;
    flex: none;
}
.check:checked {
    background: #8c8c8c;
}
.check:checked::before {
    content: "";
    width: 8px;
    height: 15px;
    margin-bottom: 4px;
    border: solid #282828;
    border-width: 0 4px 4px 0;
    rotate: 40deg;
}
.check:disabled {
    border-color: #4b4b4b;
}
.check:checked:disabled {
    background: #4b4b4b;
}
.snapping label {
    margin-left: 6px;
}
.edge-icon {
    margin: 0 12px 0 22px;
    color: #b4b4b4;
}
.tool.snap-box {
    width: 46px;
}
.workspaces {
    flex: 1;
    display: flex;
    gap: 87px;
    align-items: center;
    height: 48px;
    margin-left: 200px;
    padding: 0 18px 0 44px;
    border-left: 2px solid #161616;
    border-right: 2px solid #383838;
}
.workspaces .current {
    gap: 25px;
    margin-right: -43px;
    color: #3a98e8;
}
.workspaces .overflow {
    margin-left: auto;
}
.overflow, .sync {
    color: #b4b4b4;
}
.sync {
    margin: 0 24px 0 12px;
}
.help-search, .find {
    display: flex;
    align-items: center;
    height: 40px;
    background: #151515;
    border: 2px solid #303030;
    border-radius: 6px;
    color: #b4b4b4;
}
.help-search {
    width: 388px;
    height: 38px;
    gap: 22px;
    padding: 0 10px;
}
.help-search input, .find input {
    flex: 1;
    min-width: 0;
}
.help-search input::placeholder {
    color: #b4b4b4;
    opacity: 1;
}

/* Panels */
.upper {
    flex: 1308 1 0;
    min-height: 0;
    display: grid;
    grid-template-columns: 720px 1fr 436px;
    gap: 8px;
    padding-left: 2px;
}
.panel {
    display: flex;
    flex-direction: column;
    min-width: 0;
    background: #282828;
}
.project {
    outline: 2px solid #3586d8;
    outline-offset: -2px;
}
.tabs {
    display: flex;
    gap: 72px;
    padding-left: 22px;
}
.tab {
    height: 52px;
    gap: 20px;
    padding-top: 6px;
    border-bottom: 4px solid transparent;
}
.tab.active {
    color: #d0d0d0;
    border-bottom-color: #b8b8b8;
}
.tab em {
    font-style: normal;
    color: #3a98e8;
}
.tab .close, .tab .lock {
    color: #a8a8a8;
}
.tab .lock {
    margin-bottom: 6px;
}
.find {
    padding: 0 12px;
}
.project-find {
    margin: 226px 10px 12px 12px;
}

/* Column headers */
.columns {
    width: 100%;
    height: 40px;
    table-layout: fixed;
    border-collapse: collapse;
    border-top: 2px solid #000;
    border-bottom: 2px solid #000;
    font-size: 18px;
    line-height: 24px;
}
.columns th {
    padding: 0;
    font-weight: 400;
    text-align: left;
    white-space: nowrap;
}
.columns svg {
    color: #b0b0b0;
}
.col {
    display: flex;
    align-items: center;
    height: 24px;
    padding-left: 8px;
    border-left: 2px solid #000;
}
.col.label {
    padding-left: 26px;
}
.sort {
    margin-left: auto;
    margin-right: 8px;
}
.w34 { width: 34px; }
.w42 { width: 42px; }
.w52 { width: 52px; }
.w64 { width: 64px; }
.w66 { width: 66px; }
.w138 { width: 138px; }
.w154 { width: 154px; }
.w166 { width: 166px; }
.w228 { width: 228px; }
.w234 { width: 234px; }
.w394 { width: 394px; }
.w406 { width: 406px; }
.switches {
    display: flex;
    align-items: center;
    gap: 6px;
}
.switches.av {
    gap: 10px;
    padding-left: 12px;
}
.switches i {
    width: 24px;
    font-family: "Liberation Serif", serif;
    font-size: 26px;
    color: #b0b0b0;
}
.matte {
    display: flex;
    gap: 24px;
    padding-left: 24px;
}
.project-list {
    flex: 1;
    display: flex;
    justify-content: flex-end;
}
.project-gutter {
    width: 35px;
    padding: 6px 4px;
    background: #252525;
    color: #b0b0b0;
}
.project-footer {
    display: flex;
    align-items: center;
    height: 36px;
    gap: 18px;
    padding-left: 8px;
    border-top: 2px solid #000;
    color: #b0b0b0;
    font-size: 20px;
}
.depth {
    width: 90px;
    height: 30px;
    background: #1e1e1e;
    border: 1px solid #303030;
    border-radius: 4px;
}
.trash {
    margin: 0 -4px;
}
.hscroll {
    flex: 1;
    height: 34px;
    margin-right: 35px;
    background: #1e1e1e;
}
.hthumb {
    display: block;
    width: 108px;
    height: 30px;
    margin: 2px;
    border-radius: 15px;
    background: #323232;
}

/* Composition viewer */
.stage {
    flex: 1;
    display: flex;
    justify-content: center;
    align-items: center;
    gap: 128px;
    margin: 52px 2px 0;
    padding-bottom: 56px;
    border-top: 2px solid #111;
    border-bottom: 2px solid #111;
}
.card {
    flex-direction: column;
    justify-content: flex-start;
    gap: 61px;
    width: 430px;
    height: 460px;
    padding-top: 120px;
    background: #1e1e1e;
    border-radius: 4px;
    color: #8f8f8f;
    font-size: 26px;
    line-height: 38px;
}
.viewer-footer {
    display: flex;
    align-items: center;
    height: 44px;
    padding-left: 24px;
    color: #484848;
}
.viewer-footer .sep {
    width: 3px;
    height: 30px;
    margin: 0 16px;
    background: #343434;
}
.select {
    display: grid;
    align-items: center;
}
.select select, .select svg {
    grid-area: 1 / 1;
}
.select select {
    appearance: none;
    width: 100%;
    opacity: 1;
}
.select svg {
    justify-self: end;
    pointer-events: none;
}
.zoom-level {
    width: 116px;
    color: #5a5a5a;
}
.resolution {
    width: 162px;
    padding-left: 6px;
    color: #5a5a5a;
}
.view-tools {
    display: flex;
    gap: 15px;
}
.view-tools .on {
    outline: 2px solid #303030;
    outline-offset: 4px;
}
.viewer-footer .aperture {
    margin: 0 14px;
}
.exposure {
    margin-right: 14px;
    color: #6a6a6a;
}
.viewer-footer > button + button {
    margin-left: 14px;
}
.timecode {
    margin-left: 10px;
    color: #6a6a6a;
}

/* Side panels */
.side {
    display: flex;
    background: #282828;
    min-width: 0;
}
.stack {
    flex: 1;
    padding: 0 2px;
}
.group {
    border-bottom: 4px solid #1a1a1a;
}
.group h2 {
    display: flex;
    align-items: center;
    justify-content: space-between;
    height: 56px;
    margin: 0;
    padding: 0 20px 0 22px;
    font-size: 21px;
    font-weight: 400;
}
.group.preview h2 {
    height: 54px;
}
.group h2.open {
    height: 58px;
    color: #c8c8c8;
}
.vscroll {
    width: 24px;
    background: #1e1e1e;
    padding: 2px 0 0 2px;
}
.vthumb {
    display: block;
    width: 20px;
    height: 86%;
    background: #323232;
    border-radius: 10px;
}
.tracker {
    height: 558px;
    border-bottom-width: 2px;
    color: #4d4d4d;
}
.pair {
    display: grid;
    grid-template-columns: 1fr 1fr;
    gap: 14px;
    height: 48px;
    padding: 0 14px 0 16px;
}
.pair.first {
    margin-top: 10px;
}
.field {
    display: grid;
    grid-template-columns: 168px 1fr;
    gap: 4px;
    align-items: center;
    height: 46px;
    padding-right: 14px;
    text-align: right;
}
.field.target {
    height: 42px;
}
.field .select {
    height: 38px;
    padding: 0 8px 0 12px;
    border: 2px solid transparent;
    border-radius: 4px;
}
.field.enabled {
    color: #b0b0b0;
}
.field.enabled .select {
    background: #1b1b1b;
    border-color: #303030;
    color: #d0d0d0;
}
.checks {
    display: flex;
    gap: 19px;
    height: 42px;
    padding-left: 16px;
}
.checks span {
    display: flex;
    align-items: center;
    gap: 7px;
}
.analyze {
    display: flex;
    align-items: center;
    gap: 26px;
    height: 50px;
    padding-left: 68px;
}
.paragraph {
    height: 306px;
    border-bottom-width: 2px;
}
.aligns {
    display: flex;
    gap: 18px;
    height: 62px;
    margin: 0 36px 0 12px;
    padding-top: 7px;
    border-bottom: 1px solid #303030;
}
.aligns div, .directions {
    display: flex;
    gap: 8px;
}
.aligns button, .directions button {
    width: 42px;
    height: 44px;
    color: #b4b4b4;
    border-radius: 4px;
}
.aligns .on, .directions .on {
    background: #151515;
    outline: 1px solid #303030;
    color: #2d8ceb;
}
.indents {
    display: grid;
    grid-template-columns: 143px 132px 1fr;
    grid-auto-rows: 40px;
    align-items: center;
    padding: 2px 0 0 11px;
}
.indents label {
    display: flex;
    align-items: center;
}
.indents svg {
    color: #b4b4b4;
}
.indents .on svg {
    color: #2d8ceb;
}
.indents input {
    width: 14px;
    margin: 0 6px 0 11px;
    color: #3a98e8;
}
.indents .two {
    width: 22px;
}
.normalize {
    border-bottom-width: 2px;
}
.script-box {
    display: flex;
    gap: 26px;
    height: 200px;
    padding: 78px 16px;
    border: 2px solid #2f2f2f;
    border-radius: 4px;
}
.script-box button {
    width: 38px;
    height: 40px;
    border: 4px solid #f5c91c;
    color: #f5c91c;
}

/* Timeline */
.timeline {
    flex: 788 1 0;
    min-height: 0;
    display: flex;
    flex-direction: column;
    margin: 8px 0 0 2px;
    background: #282828;
    border-radius: 0 0 0 14px;
}
.timeline .tabs {
    height: 57px;
    gap: 80px;
    padding-left: 55px;
}
.tracks {
    flex: 1;
    min-height: 0;
    display: grid;
    grid-template-columns: 1fr 1688px 36px;
}
.layers {
    border-right: 2px solid #111;
}
.layer-tools {
    display: flex;
    align-items: center;
    height: 70px;
    padding: 0 30px 2px 204px;
    color: #404040;
}
.layer-tools .find {
    flex: 1;
    margin-right: 28px;
}
.layer-tools button {
    margin-right: 20px;
}
.layer-tools .flowchart {
    margin-right: 35px;
}
.layer-tools .graph {
    margin: 0 0 0 18px;
}
.time {
    display: flex;
    flex-direction: column;
    padding-top: 10px;
}
.workarea {
    height: 20px;
    background: #666;
    border: solid #000;
    border-width: 2px 0;
    display: flex;
    justify-content: space-between;
}
.workarea::before, .workarea::after {
    content: "";
    width: 14px;
    background: linear-gradient(#2d8ceb, #2d8ceb) left / 13px no-repeat #000;
    border-radius: 10px 0 0 10px / 8px 0 0 8px;
    box-shadow: -6px 0 0 #282828;
}
.workarea::after {
    background-position: right;
    border-radius: 0 10px 10px 0 / 0 8px 8px 0;
    box-shadow: none;
}
.workarea::before {
    box-shadow: none;
}
.ruler {
    display: flex;
    justify-content: space-between;
    height: 34px;
    margin-top: 38px;
    padding: 0 13px;
    background: #212121;
    border-bottom: 2px solid #000;
}
.ruler i {
    width: 2px;
    height: 12px;
    background: #9b9b9b;
}
.lane {
    flex: 1;
    margin-top: 5px;
    border-top: 2px solid #000;
    background: linear-gradient(to right, #282828 14px, #363636 14px calc(100% - 14px), #282828 calc(100% - 14px));
}
.markers {
    display: flex;
    flex-direction: column;
}
.bin {
    height: 111px;
    padding: 74px 0 0 8px;
    border-bottom: 2px solid #000;
}
.comp-button {
    flex: 1;
    padding: 4px 0 0 2px;
    background: linear-gradient(#282828 34px, #232323 34px);
    color: #b4b4b4;
}
.timeline-footer {
    display: grid;
    grid-template-columns: 1fr 204px 1509px;
    height: 38px;
}
.footer-left {
    display: flex;
    align-items: center;
    gap: 4px;
    padding-left: 6px;
    border-top: 2px solid #000;
    color: #b4b4b4;
}
.footer-left button {
    width: 35px;
    height: 32px;
}
.footer-left .on {
    outline: 1px solid #303030;
    color: #2d8ceb;
}
.render-time {
    margin-left: 12px;
    color: #a8a8a8;
}
.render-time small {
    margin-left: 4px;
    font-size: 21px;
    color: #6a6a6a;
}
.footer-zoom {
    display: flex;
    align-items: center;
    gap: 20px;
    border-top: 2px solid #000;
}
.footer-zoom input {
    appearance: none;
    width: 98px;
    height: 20px;
    background: linear-gradient(#444, #444) center / 100% 4px no-repeat;
}
.footer-zoom input::-webkit-slider-thumb {
    appearance: none;
    width: 20px;
    height: 20px;
    border: 4px solid #9b9b9b;
    border-radius: 50%;
    background: #282828;
}
.footer-scroll {
    background: #202020;
}
```
